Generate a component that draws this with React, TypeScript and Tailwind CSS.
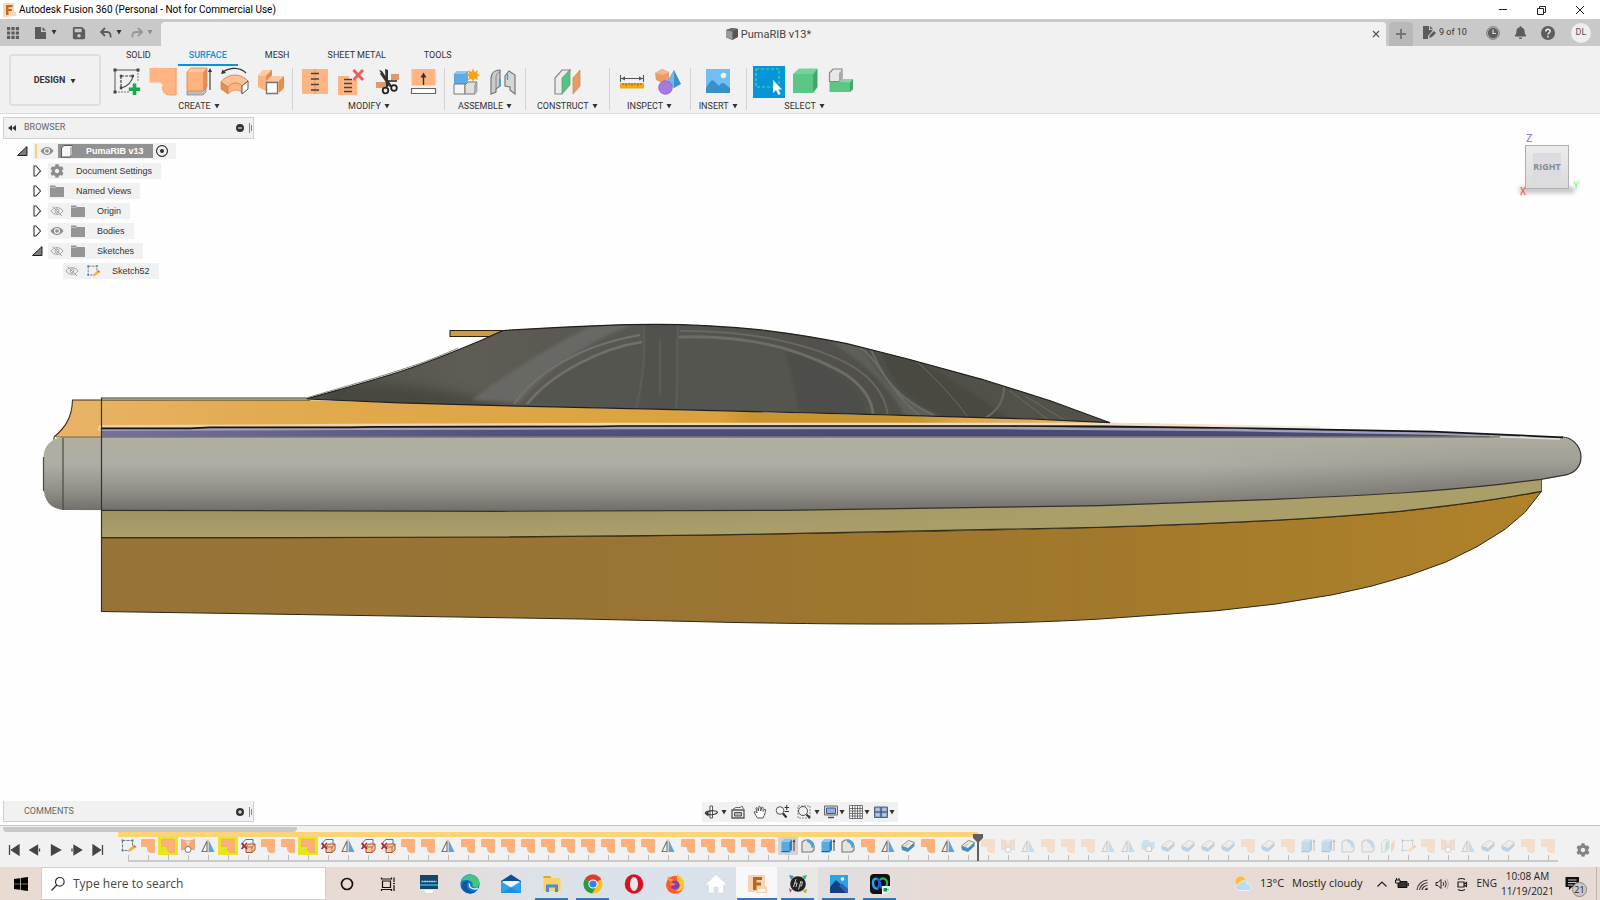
import React from "react";
import { FaCog, FaBell, FaSave } from "react-icons/fa";

type P = { children?: React.ReactNode };

const Ic = ({ children, box = 32, className = "size-8" }: P & { box?: number; className?: string }) => (
  <svg viewBox={`0 0 ${box} ${box}`} className={className + " shrink-0"} fill="none" aria-hidden="true">
    {children}
  </svg>
);

const Caret = ({ className = "text-[#333]" }: { className?: string }) => (
  <svg viewBox="0 0 6 5" className={"h-[5px] w-[6px] shrink-0 " + className} aria-hidden="true">
    <path d="M0.500 0H5.500L3 4.500Z" fill="currentColor" />
  </svg>
);

/* ---------- Ribbon icons, drawn on a 32px grid ---------- */

const PatchIcon = () => (
  <Ic>
    <path d="M2.500 2H29.500V29H24C18 29 15.500 26 15.500 21V19.500C15.500 17.500 14 16.500 12 16.500H2.500Z" fill="#ffb583" />
    <path d="M29 2V29H24C18 29 15.500 26 15.500 21" stroke="#f3a069" strokeWidth="1" />
  </Ic>
);

const SketchIcon = () => (
  <Ic>
    <path d="M4 4H27M4 4V26" stroke="#555" strokeWidth="1" />
    <path d="M27 4V16M4 26H18" stroke="#777" strokeWidth="1" strokeDasharray="2 1" />
    <path d="M10 10V22M10 10H22" stroke="#444" strokeWidth="1.200" strokeDasharray="3 1" />
    <path d="M22 10C21 16 16 21 10 22" stroke="#444" strokeWidth="1.200" />
    <path d="M2.500 2.500h3v3h-3zM25.500 2.500h3v3h-3zM2.500 24.500h3v3h-3zM8.800 8.800h2.500v2.500h-2.500zM8.800 20.800h2.500v2.500h-2.500zM20.500 8.800h2.500v2.500h-2.500z" fill="#444" />
    <path d="M23.500 17.500V29M17.800 23.200H29.200" stroke="#1fa64a" strokeWidth="3.600" />
  </Ic>
);

const ExtrudeIcon = () => (
  <Ic>
    <path d="M4 25L7 22H23V26L20 29H4Z" fill="#b9bcc0" stroke="#777" strokeWidth=".6" />
    <path d="M4 6L8 2H24L20 6Z" fill="#ffc79e" />
    <path d="M4 6H20V25H4Z" fill="#ffb27c" />
    <path d="M20 6L24 2V21L20 25Z" fill="#e88f57" />
    <path d="M4 6L8 2H24V21L20 25H4Z" stroke="#d98850" strokeWidth=".8" />
    <path d="M27 24V5" stroke="#444" strokeWidth="1.200" />
    <path d="M27 2L29 6H25Z" fill="#333" />
  </Ic>
);

const SweepIcon = () => (
  <Ic>
    <path d="M4 6C11 1 21 1 27 7" stroke="#333" strokeWidth="1.200" />
    <path d="M2 8L3.500 3.500L7 7Z" fill="#333" />
    <path d="M2 16C9 7 22 7 29 15L23 20C19 16 13 16 9 21Z" fill="#ffc093" stroke="#c97c48" strokeWidth=".8" />
    <path d="M2 16L9 21V28L2 23Z" fill="#e98c52" stroke="#c97c48" strokeWidth=".6" />
    <path d="M9 21C13 16 19 16 23 20V27C19 23 14 23 9 28Z" fill="#ffb583" stroke="#c97c48" strokeWidth=".6" />
    <path d="M23 20L29 15V23L23 28Z" fill="#fff" stroke="#555" strokeWidth="1" />
  </Ic>
);

const FlangeIcon = () => (
  <Ic>
    <path d="M3 10L8 4H17V10H27L29 13V21L24 26H13L3 21Z" fill="#ffb27c" />
    <path d="M3 10L8 4H17L12 10ZM12 15L17 10H29L24 15Z" fill="#ffc9a3" />
    <path d="M24 15L29 10V22L24 27Z" fill="#e98c52" />
    <path d="M11 10L17 3.500V9L11 15Z" fill="#e58a50" />
    <path d="M11.500 16.500H22.500V27.500H11.500Z" fill="#fff" stroke="#777" strokeWidth="1.400" />
  </Ic>
);

const StitchIcon = () => (
  <Ic>
    <path d="M3 3H29V28H3Z" fill="#ffb583" />
    <path d="M16 3V28" stroke="#ef965c" strokeWidth="1" />
    <path d="M12 7.500H20M12 13H20M12 18.500H20M12 24H20" stroke="#444" strokeWidth="1.300" />
  </Ic>
);

const UnstitchIcon = () => (
  <Ic>
    <path d="M3 10H14V29H3ZM16 14H22V29H14V14Z" fill="#ffb583" />
    <path d="M9 13.500H17M9 17.500H17M9 21.500H17M9 25.500H17" stroke="#444" strokeWidth="1.300" />
    <path d="M18.500 4L28 14M28 4L18.500 14" stroke="#f25b5b" strokeWidth="3" />
  </Ic>
);

const TrimIcon = () => (
  <Ic>
    <path d="M5 16H16V22H5ZM20 8H28V14H20Z" fill="#e2996a" />
    <path d="M8 4L11 5L21 20L19 21ZM14 3L17 4L17 21H15Z" fill="#333" />
    <path d="M10 7L19 20" stroke="#333" strokeWidth="2.400" />
    <circle cx="14.500" cy="24.500" r="2.800" stroke="#222" strokeWidth="1.800" />
    <circle cx="23" cy="22" r="2.800" stroke="#222" strokeWidth="1.800" />
    <path d="M17 15H26" stroke="#333" strokeWidth="1.600" />
  </Ic>
);

const ExtendIcon = () => (
  <Ic>
    <path d="M4.500 3H28.500V19.500H4.500Z" fill="#ffb583" />
    <path d="M4.500 22.500H28.500V27.500H4.500Z" fill="#fff" stroke="#666" strokeWidth="1.200" />
    <path d="M16.500 19V9" stroke="#333" strokeWidth="1.400" />
    <path d="M16.500 6.500L19.500 11.500H13.500Z" fill="#333" />
  </Ic>
);

const ComponentIcon = () => (
  <Ic>
    <path d="M3 8L6 5H17V15L15 18H3Z" fill="#5ea9e6" />
    <path d="M3 8L6 5H17L14 8Z" fill="#8cc6f2" />
    <path d="M3 18H14V28H3Z" fill="#f4f4f4" stroke="#777" />
    <path d="M14 19L17 16H26L24 19V28H14Z" fill="#e0e0e0" stroke="#777" />
    <path d="M24 19L26.500 16.500V25.500L24 28Z" fill="#aaa" />
    <path d="M22 2.500L23.500 6L27 4.300L26 7.800L29 9L26 10.500L27 14L23.500 12.500L22 16L20.500 12.500L17 14L18 10.500L15 9L18 7.800L17 4.300L20.500 6Z" fill="#f6a21b" />
  </Ic>
);

const JointIcon = () => (
  <Ic>
    <path d="M4 28V13C4 7 8 4 13 4V20L9 23V26Z" fill="#c9ccce" stroke="#777" strokeWidth="1.200" />
    <path d="M9 24V12C9 8 11 6 13.500 6" stroke="#888" strokeWidth="1" />
    <path d="M18 20V10L22 5L28 9V28L23 24V21Z" fill="#d4d6d8" stroke="#777" strokeWidth="1.200" />
    <path d="M13 13V20M20.500 8V14" stroke="#2f9be0" strokeWidth="1.300" />
  </Ic>
);

const PlaneIcon = () => (
  <Ic>
    <path d="M4 28V12L11 4H19L11 28Z" fill="#ececec" stroke="#888" strokeWidth="1.200" />
    <path d="M11 12L19 3.500V19L11 28Z" fill="#52c582" stroke="#6d8f7a" strokeWidth=".7" />
    <path d="M22 12L29 4V20L22 28Z" fill="#e99a67" stroke="#c98559" strokeWidth=".7" />
  </Ic>
);

const MeasureIcon = () => (
  <Ic>
    <path d="M4.500 9V16M27.500 9V16M5 12.500H27" stroke="#555" strokeWidth="1.100" />
    <path d="M5 12.500L9 10.500V14.500ZM27 12.500L23 10.500V14.500Z" fill="#555" />
    <path d="M4 17H28V22.500H4Z" fill="#f6a80e" />
    <path d="M7 17v2M10 17v3M13 17v2M16 17v3M19 17v2M22 17v3M25 17v2" stroke="#7b5200" strokeWidth=".8" />
  </Ic>
);

const InterferenceIcon = () => (
  <Ic>
    <path d="M3 7L10 3L17 6V13L10 17L4 14Z" fill="#ec9a68" />
    <path d="M3 7L10 3L17 6L11 9Z" fill="#f6b58b" />
    <path d="M22 4L29 18L22 22L15 16Z" fill="#3f8fcd" />
    <path d="M22 4V22L15 16Z" fill="#74b8ea" />
    <circle cx="13.500" cy="21.500" r="6.800" fill="#a67bdf" stroke="#8a5cc9" strokeWidth=".8" />
  </Ic>
);

const PictureIcon = () => (
  <Ic>
    <path d="M4 3H28V27H4Z" fill="#72bff5" />
    <path d="M4 22C8 15 10 13 12 15L17 20C19 17 21 16 23 18L28 22V27H4Z" fill="#3c8fc9" />
    <circle cx="21.500" cy="9.500" r="2.700" fill="#fdf7bd" />
  </Ic>
);

const SelectIcon = () => (
  <Ic>
    <path d="M0 0H32V32H0Z" fill="#0696d7" />
    <path d="M3 3H26V21H3Z" stroke="#59d68f" strokeWidth="1.200" strokeDasharray="3 2" />
    <path d="M20 14V27L23 24L25.500 29L27.500 28L25.300 23.500H29Z" fill="#fff" />
  </Ic>
);

const GreenBox = () => (
  <Ic>
    <path d="M4 8L10 2.500H28.500L24 8Z" fill="#74d39a" />
    <path d="M4 8H24V27H4Z" fill="#5bc686" />
    <path d="M24 8L28.500 2.500V21L24 27Z" fill="#41a76a" />
  </Ic>
);

const BodySelectIcon = () => (
  <Ic>
    <path d="M4.500 7L8 3H17V12L14 15.500H4.500Z" fill="#e8e8e8" stroke="#888" strokeWidth="1.200" />
    <path d="M14 15L17 12V4L14 7Z" fill="#aaa" />
    <path d="M4.500 16H15L17 13H28V23L25 26H4.500Z" fill="#5bc686" />
    <path d="M15 16L17.500 13H28L25 16.500Z" fill="#83d9a6" />
    <path d="M25 16.500L28 13V23L25 26Z" fill="#41a76a" />
  </Ic>
);

/* ---------- Timeline icons, drawn on a 16px grid ---------- */

type Kind = "sketch" | "patch" | "loft" | "mirror" | "remove" | "box" | "fillet" | "thicken" | "combine" | "plane";

const glyphs: Record<Kind, React.ReactNode> = {
  sketch: (
    <>
      <path d="M2.500 2.500H12.500V9M2.500 2.500V12.500H9" stroke="#777" strokeWidth="1" strokeDasharray="3 1" />
      <path d="M1.500 1.500h2v2h-2zM11.500 1.500h2v2h-2zM1.500 11.500h2v2h-2z" fill="#2f8fd6" />
      <path d="M8 14L9 11L13 8L15 10L11 13Z" fill="#f7b23c" />
      <path d="M13 8L14.500 7L16 9L15 10Z" fill="#e8483c" />
    </>
  ),
  patch: <path d="M1.500 1.500H14.500V14.500H11C8.500 14.500 7.500 13 7.500 11V10.500C7.500 9 7 8.500 5.500 8.500H1.500Z" fill="#ffb07a" stroke="#f2a36c" strokeWidth=".6" />,
  loft: (
    <>
      <path d="M1.500 1.500L5 2.500H11L14.500 1.500V12L11 11H5L1.500 12Z" fill="#f6a878" stroke="#c58860" strokeWidth=".5" />
      <path d="M5 2.500L8 8L11 2.500Z" fill="#ffd0b0" />
      <circle cx="8" cy="11.500" r="3" fill="#fff" stroke="#777" />
    </>
  ),
  mirror: (
    <>
      <path d="M7 3V13.500H2Z" fill="#f2f2f2" stroke="#777" strokeWidth="1.100" />
      <path d="M9 2.500L14.500 14H9Z" fill="#5ba7dd" />
      <path d="M8 1.500V14.500" stroke="#999" strokeWidth=".8" />
    </>
  ),
  remove: (
    <>
      <path d="M3 4L6 1.500H13V6L10 9H3Z" fill="#eef4fa" stroke="#2f7fc0" />
      <path d="M6 9L8.500 6H15V12L12 14.500H6Z" fill="#ffc79e" stroke="#9a5c33" />
      <path d="M6 9H12V14.500M12 9L15 6" stroke="#9a5c33" strokeWidth=".8" />
      <path d="M1.500 5L7 11M7 5L1.500 11" stroke="#c8202a" strokeWidth="1.800" />
    </>
  ),
  box: (
    <>
      <path d="M1.500 4L4 1.500H12V11.500L9.500 14.500H1.500Z" fill="#59a9e2" />
      <path d="M1.500 4L4 1.500H12L9.500 4Z" fill="#8cc8f0" />
      <path d="M9.500 4L12 1.500V11.500L9.500 14.500Z" fill="#2f7fb8" />
      <path d="M1.500 13.500H9" stroke="#555" />
      <path d="M14 13V3" stroke="#444" />
      <path d="M14 1L15.300 4H12.700Z" fill="#333" />
    </>
  ),
  fillet: (
    <>
      <path d="M2 13.500V4L5 2H9C12 3 14 6 14 9V12L12 14H2Z" fill="#e4e4e4" stroke="#777" strokeWidth="1.100" />
      <path d="M7 1.500C11.500 1.500 14.500 5 14.500 9L11.500 10C11.500 7 9.500 4.500 7 4Z" fill="#4fa3de" />
    </>
  ),
  thicken: (
    <>
      <path d="M1.500 9.500L2 8L14.500 5V8L8 14L2 12Z" fill="#3f8dc9" />
      <path d="M1.500 8L8.500 2.500L14.500 4.500L8 10.500Z" fill="#f1f1f1" stroke="#777" strokeWidth=".9" />
      <path d="M3.500 8.200L8.500 4.200L10.500 5L6 9Z" fill="#d2d2d2" />
    </>
  ),
  combine: (
    <>
      <path d="M1.500 5L4 2H9V4H14.500V10L12 12.500H5L1.500 11Z" fill="#79b9e6" />
      <path d="M6 8H11.500V13.500H6Z" fill="#fff" stroke="#777" />
    </>
  ),
  plane: (
    <>
      <path d="M1.500 14V5L5 1.500H7L5 14Z" fill="#e8e8e8" stroke="#888" strokeWidth=".8" />
      <path d="M5.500 6L9.500 1.500V10L5.500 14.500Z" fill="#52c582" />
      <path d="M11 6L14.500 1.500V10L11 14.500Z" fill="#e99a67" />
    </>
  ),
};

const rep = (k: Kind, n: number): Kind[] => Array.from({ length: n }, () => k);

const timeline: Kind[] = [
  "sketch", "patch", "patch", "loft", "mirror", "patch", "remove", "patch", "patch", "patch", "remove", "mirror", "remove", "remove",
  "patch", "patch", "mirror", ...rep("patch", 10), "mirror", ...rep("patch", 5),
  "box", "fillet", "box", "fillet", "patch", "mirror", "thicken", "patch", "mirror", "thicken",
  "patch", "loft", "mirror", ...rep("patch", 3), "mirror", "mirror", "combine", ...rep("thicken", 4),
  "patch", "thicken", "patch", "box", "box", "fillet", "fillet", "plane", "sketch", "patch", "loft", "mirror",
  "thicken", "thicken", "patch", "patch",
];

const MARKER = 42;
const errors = [2, 5, 9];

/* ---------- Title and document tabs ---------- */

const TitleBar = () => (
  <header className="flex h-[19px] items-center bg-white pl-[2px]">
    <Ic box={14} className="size-[14px]">
      <path d="M1 0H12V9H14V13H8V14H1Z" fill="#f9d8ba" />
      <path d="M4 2H10.500V4.200H6.500V6H10V8H6.500V12H4Z" fill="#c5691c" />
    </Ic>
    <h1 className="ml-[3px] text-[10px] leading-4 text-black">Autodesk Fusion 360 (Personal - Not for Commercial Use)</h1>
    <div className="ml-auto flex h-full items-center">
      <button aria-label="Minimize" className="flex w-[38px] justify-center">
        <Ic box={10} className="size-[10px]"><path d="M1 4.500H9" stroke="#222" /></Ic>
      </button>
      <button aria-label="Restore" className="flex w-[38px] justify-center">
        <Ic box={10} className="size-[10px]"><path d="M1.500 3.500H7.500V9.500H1.500ZM3.500 3V1.500H9.500V7.500H8" stroke="#222" /></Ic>
      </button>
      <button aria-label="Close" className="flex w-10 justify-center">
        <Ic box={10} className="size-[10px]"><path d="M1 1L9 9M9 1L1 9" stroke="#222" /></Ic>
      </button>
    </div>
  </header>
);

const DocBar = () => (
  <div className="flex h-[27px] bg-[#c9c9c9] text-[#5c5c5c]">
    <div className="flex w-[161px] shrink-0 items-center pl-[7px]">
      <button aria-label="Data panel">
        <Ic box={12} className="size-3">
          <path d="M0 0h3.200v3.200H0zM4.400 0h3.200v3.200H4.400zM8.800 0H12v3.200H8.800zM0 4.400h3.200v3.200H0zM4.400 4.400h3.200v3.200H4.400zM8.800 4.400H12v3.200H8.800zM0 8.800h3.200V12H0zM4.400 8.800h3.200V12H4.400zM8.800 8.800H12V12H8.800z" fill="#5c5c5c" />
        </Ic>
      </button>
      <button aria-label="File" className="ml-4 flex items-center gap-1">
        <Ic box={12} className="size-3"><path d="M0 0H6V5H11V12H0ZM7.500 0L11 3.500H7.500Z" fill="#5c5c5c" /></Ic>
        <Caret />
      </button>
      <button aria-label="Save" className="ml-[15px]"><FaSave className="size-[14px]" /></button>
      <button aria-label="Undo" className="ml-[13px] flex items-center gap-[3px]">
        <Ic box={14} className="size-[14px]"><path d="M2 6H8C11 6 12 8 11.500 11.500M6 2L2 6L6 10" stroke="#5c5c5c" strokeWidth="1.800" /></Ic>
        <Caret />
      </button>
      <button aria-label="Redo" className="ml-2 flex items-center gap-[3px]">
        <Ic box={14} className="size-[14px]"><path d="M12 6H6C3 6 2 8 2.500 11.500M8 2L12 6L8 10" stroke="#969696" strokeWidth="1.800" /></Ic>
        <Caret className="text-[#8a8a8a]" />
      </button>
    </div>
    <div className="mt-[3px] flex flex-1 items-center rounded-t bg-[#f1f1f1] pr-[3px]">
      <div className="flex flex-1 items-center justify-center gap-[2px] pl-[6px]">
        <Ic box={14} className="size-[14px]">
          <path d="M1 3L7 1L13 2V10L7.500 13L1 10.500Z" fill="#555" />
          <path d="M1 3L7.500 4.500V13L1 10.500Z" fill="#9a9a9a" />
          <path d="M1 3L7 1L13 2L7.500 4.500Z" fill="#6b6b6b" />
        </Ic>
        <span className="pt-px text-[11px] leading-4 text-[#444]">PumaRIB v13*</span>
      </div>
      <button aria-label="Close document" className="p-[3px]">
        <Ic box={8} className="size-2"><path d="M1 1L7 7M7 1L1 7" stroke="#555" strokeWidth="1.200" /></Ic>
      </button>
    </div>
    <button aria-label="New design" className="ml-[3px] mt-[3px] flex w-6 items-center justify-center rounded-t bg-[#b9b9b9]">
      <Ic box={12} className="size-3"><path d="M6 1V11M1 6H11" stroke="#777" strokeWidth="2" /></Ic>
    </button>
    <div className="flex w-[187px] items-center pl-[9px]">
      <button className="flex items-center gap-[3px] text-[9px] text-[#333]">
        <Ic box={14} className="size-[14px]">
          <path d="M1 0H7V4H11L6 10V13H1Z" fill="#5c5c5c" />
          <path d="M8 0L11 3H8ZM7 12L8 9L12 5L14 7L10 11Z" fill="#5c5c5c" />
        </Ic>
        9 of 10
      </button>
      <button aria-label="Job status" className="ml-[19px]">
        <Ic box={14} className="size-[14px]">
          <circle cx="7" cy="7" r="6.300" stroke="#5c5c5c" strokeWidth=".8" />
          <circle cx="7" cy="7" r="5.200" fill="#5c5c5c" />
          <path d="M7 3.500V7.500H10" stroke="#ddd" strokeWidth="1.200" />
        </Ic>
      </button>
      <button aria-label="Notifications" className="ml-[14px]"><FaBell className="size-[13px]" /></button>
      <button aria-label="Help" className="ml-[14px]">
        <Ic box={14} className="size-[14px]">
          <circle cx="7" cy="7" r="7" fill="#5c5c5c" />
          <path d="M4.800 5.500C4.800 2.500 9.300 2.600 9.200 5.300C9.100 6.800 7 6.800 7 8.600M7 9.800V11.500" stroke="#eee" strokeWidth="1.500" />
        </Ic>
      </button>
      <button aria-label="Account DL" className="ml-4 flex size-5 items-center justify-center rounded-full bg-[#efefef] text-[9px] text-[#555]">DL</button>
    </div>
  </div>
);

/* ---------- Ribbon ---------- */

const tabs = ["SOLID", "SURFACE", "MESH", "SHEET METAL", "TOOLS"];

const groups: { name: string; pad: string; icons: [string, React.ReactNode][] }[] = [
  { name: "CREATE", pad: "pl-1 pr-[3px]", icons: [["Create sketch", <SketchIcon />], ["Patch", <PatchIcon />], ["Extrude", <ExtrudeIcon />], ["Sweep", <SweepIcon />], ["Thicken", <FlangeIcon />]] },
  { name: "MODIFY", pad: "pl-1 pr-[3px]", icons: [["Stitch", <StitchIcon />], ["Unstitch", <UnstitchIcon />], ["Trim", <TrimIcon />], ["Extend", <ExtendIcon />]] },
  { name: "ASSEMBLE", pad: "px-1", icons: [["New component", <ComponentIcon />], ["Joint", <JointIcon />]] },
  { name: "CONSTRUCT", pad: "px-[11px]", icons: [["Offset plane", <PlaneIcon />]] },
  { name: "INSPECT", pad: "px-1", icons: [["Measure", <MeasureIcon />], ["Interference", <InterferenceIcon />]] },
  { name: "INSERT", pad: "px-2", icons: [["Canvas", <PictureIcon />]] },
  { name: "SELECT", pad: "px-1", icons: [["Window selection", <SelectIcon />], ["Select body", <GreenBox />], ["Select component", <BodySelectIcon />]] },
];

const Ribbon = () => (
  <div className="flex h-[68px] border-b border-[#dcdcdc] bg-[#f1f1f1]">
    <button className="ml-[9px] mr-1 mt-2 flex h-[52px] w-[92px] shrink-0 items-center justify-center gap-[5px] rounded border-2 border-[#dedede] pt-[2px] text-[9px] font-bold text-[#333]">
      DESIGN <Caret />
    </button>
    <div className="flex min-w-0 flex-col">
      <div role="tablist" className="flex h-5 gap-4 pl-[10px]" aria-label="Workspace tabs">
        {tabs.map((t) => (
          <button
            key={t}
            role="tab"
            aria-selected={t === "SURFACE"}
            className={
              "border-b-2 px-[11px] text-[9px] leading-4 " +
              (t === "SURFACE" ? "border-[#0696d7] font-medium text-[#0696d7]" : "border-transparent text-[#333]")
            }
          >
            {t}
          </button>
        ))}
      </div>
      <div className="flex">
        {groups.map((g, i) => (
          <React.Fragment key={g.name}>
            {i > 0 && <div className="mt-[2px] h-[42px] w-px bg-[#d2d2d2]" />}
            <div className={"flex flex-col items-center " + g.pad}>
              <div className="flex">
                {g.icons.map(([label, icon]) => (
                  <button key={label} aria-label={label} className="flex w-9 justify-center">{icon}</button>
                ))}
              </div>
              <button className="flex h-[15px] items-center gap-[3px] pt-px text-[9px] leading-[14px] text-[#333]">
                {g.name} <Caret />
              </button>
            </div>
          </React.Fragment>
        ))}
      </div>
    </div>
  </div>
);

/* ---------- Browser tree ---------- */

const Eye = ({ off = false }: { off?: boolean }) => (
  <Ic box={14} className="size-[14px]">
    {off ? (
      <>
        <path d="M1 7C4 2.500 10 2.500 13 7C10 11.500 4 11.500 1 7Z" stroke="#a3a3a3" />
        <circle cx="7" cy="7" r="2" stroke="#a3a3a3" />
        <path d="M2.500 2.500L12 12" stroke="#a3a3a3" />
      </>
    ) : (
      <>
        <path d="M0.500 7C4 1.500 10 1.500 13.500 7C10 12.500 4 12.500 0.500 7Z" fill="#8f8f8f" />
        <circle cx="7" cy="7" r="3" fill="#f1f1f1" />
        <circle cx="7" cy="7" r="1.800" fill="#8f8f8f" />
      </>
    )}
  </Ic>
);

const Arrow = ({ open = false }: { open?: boolean }) => (
  <Ic box={12} className="size-3">
    {open ? (
      <path d="M11 1.500V10.500H1.500Z" fill="#7c7c7c" stroke="#222" />
    ) : (
      <path d="M3 1H5L9.500 6L5 11H3Z" fill="#fff" stroke="#333" strokeWidth="1.100" />
    )}
  </Ic>
);

const SmallSketch = () => <Ic box={16} className="size-[14px]">{glyphs.sketch}</Ic>;
const Folder = () => (
  <Ic box={14} className="size-[14px]"><path d="M0 1.500H5L6 3H14V13H0Z" fill="#959595" /><path d="M0 3.500H5.500" stroke="#c9c9c9" strokeWidth=".8" /></Ic>
);

const TreeRow = ({ open, eye, icon, label, indent }: { open?: boolean; eye?: "on" | "off"; icon: React.ReactNode; label: string; indent: string }) => (
  <li className={"flex h-5 items-center " + indent}>
    {open === undefined ? <span className="w-3" /> : <button aria-label={"Toggle " + label}><Arrow open={open} /></button>}
    <div className="ml-[5px] flex h-4 items-center bg-[#f1f1f1] pl-[2px] pr-[9px]">
      {eye && <button aria-label={"Show or hide " + label} className="mr-[7px]"><Eye off={eye === "off"} /></button>}
      {icon}
      <span className="ml-3 text-[9px] leading-4 text-[#333]">{label}</span>
    </div>
  </li>
);

const PanelEnd = ({ plus = false }: { plus?: boolean }) => (
  <>
    <button aria-label={plus ? "Add comment" : "Collapse"} className="ml-auto">
      <Ic box={8} className="size-2">
        <circle cx="4" cy="4" r="4" fill="#333" />
        <path d={plus ? "M2 4H6M4 2V6" : "M2 4H6"} stroke="#fff" />
      </Ic>
    </button>
    <svg viewBox="0 0 4 10" className="ml-[5px] h-[10px] w-1" fill="none" aria-hidden="true"><path d="M0.500 0V10M2.500 2V8" stroke="#888" /></svg>
  </>
);

const BrowserPanel = () => (
  <section className="w-[251px]">
    <div className="flex h-[22px] items-center border border-[#cfcfcf] bg-[#f1f1f1] pl-1">
      <button aria-label="Collapse browser">
        <Ic box={8} className="size-2"><path d="M4 1V7L0 4ZM8 1V7L4 4Z" fill="#333" /></Ic>
      </button>
      <h2 className="ml-2 text-[9px] text-[#666]">BROWSER</h2>
      <PanelEnd />
    </div>
    <ul className="pt-[2px] font-['Liberation_Sans',sans-serif]">
      <li className="flex h-5 items-center pl-[13px]">
        <button aria-label="Toggle PumaRIB v13"><Arrow open /></button>
        <div className="ml-[5px] flex h-4 items-center bg-[#f1f1f1] pl-[2px] pr-1">
          <span className="h-[14px] w-[2px] bg-[#fbd070]" />
          <button aria-label="Show or hide PumaRIB v13" className="ml-[3px]"><Eye /></button>
          <div className="ml-1 flex h-[14px] items-center bg-[#929292] pl-[2px] pr-[9px]">
            <Ic box={14} className="size-[14px]">
              <path d="M1.500 4L4 1.500H12.500V10.500L10 13H1.500Z" fill="#f6f6f6" stroke="#555" />
              <path d="M10 4L12.500 1.500V10.500L10 13Z" fill="#bbb" />
            </Ic>
            <span className="ml-3 text-[9px] font-bold leading-4 text-white">PumaRIB v13</span>
          </div>
          <label className="ml-[3px] mr-1 flex">
            <input type="radio" defaultChecked aria-label="Activate PumaRIB v13" className="size-3 appearance-none rounded-full border border-[#333] bg-[#333] shadow-[inset_0_0_0_3px_#f1f1f1]" />
          </label>
        </div>
      </li>
      <TreeRow indent="pl-7" open={false} icon={<FaCog className="size-[14px] text-[#8c8c8c]" />} label="Document Settings" />
      <TreeRow indent="pl-7" open={false} icon={<Folder />} label="Named Views" />
      <TreeRow indent="pl-7" open={false} eye="off" icon={<Folder />} label="Origin" />
      <TreeRow indent="pl-7" open={false} eye="on" icon={<Folder />} label="Bodies" />
      <TreeRow indent="pl-7" open eye="off" icon={<Folder />} label="Sketches" />
      <TreeRow indent="pl-[43px]" eye="off" icon={<SmallSketch />} label="Sketch52" />
    </ul>
  </section>
);

/* ---------- Model ---------- */

const cabin =
  "M306 399C345 388 380 379 413 367.300C440 357.500 463 348 482 340L503 330.500C553 327.500 610 324.300 655 324.300C695 324.300 730 326.500 765 330.300C795 334 820 338 847 343.700L908 359L982 379.300L1051 401L1110 422.700L1031 419L867 414.300L663 409.300L500 405.700L400 402.800Z";
const tubeBottom = "C600 511.500 700 511.500 786 510.300C900 508.500 1020 507.500 1100 505.700C1160 504 1215 502 1267 499.700C1315 497.500 1360 495.500 1400 493C1435 490.500 1470 487.500 1500 484.300L1541 479.300";
const chineCurve = "C1500 499.300 1450 506 1400 511.300C1360 515 1310 518.500 1267 520.700C1210 523.500 1160 525.700 1100 527.300C1000 530 900 532 786 533.700C690 535.500 590 536.500 500 537C360 537.700 240 537.700 101.500 537.700";

const Boat = () => (
  <svg viewBox="0 114 1600 711" className="absolute inset-0 h-full w-full" fill="none" role="img" aria-label="Side view of boat model">
    <defs>
      <linearGradient id="tube" x1="0" y1="437" x2="0" y2="511" gradientUnits="userSpaceOnUse">
        <stop offset="0" stopColor="#b1afa0" />
        <stop offset=".38" stopColor="#aeaca5" />
        <stop offset=".75" stopColor="#8f8c86" />
        <stop offset="1" stopColor="#706e68" />
      </linearGradient>
      <linearGradient id="bowTube" x1="0" y1="437" x2="0" y2="495" gradientUnits="userSpaceOnUse">
        <stop offset="0" stopColor="#aeac9f" />
        <stop offset=".4" stopColor="#a2a097" />
        <stop offset=".8" stopColor="#84827b" />
        <stop offset="1" stopColor="#77756e" />
      </linearGradient>
      <linearGradient id="bowFade" x1="1200" y1="0" x2="1480" y2="0" gradientUnits="userSpaceOnUse">
        <stop offset="0" stopColor="#fff" stopOpacity="0" />
        <stop offset="1" stopColor="#fff" />
      </linearGradient>
      <mask id="bowMask" maskUnits="userSpaceOnUse" x="1200" y="420" width="400" height="100">
        <path d="M1200 420H1600V520H1200Z" fill="url(#bowFade)" />
      </mask>
      <linearGradient id="hull" x1="101" y1="0" x2="1541" y2="0" gradientUnits="userSpaceOnUse">
        <stop offset="0" stopColor="#977339" />
        <stop offset=".4" stopColor="#9a7432" />
        <stop offset=".7" stopColor="#a2792b" />
        <stop offset="1" stopColor="#b0832a" />
      </linearGradient>
      <linearGradient id="olive" x1="0" y1="508" x2="0" y2="540" gradientUnits="userSpaceOnUse">
        <stop offset="0" stopColor="#9b9160" />
        <stop offset="1" stopColor="#b0a26d" />
      </linearGradient>
      <linearGradient id="oliveBow" x1="400" y1="0" x2="1100" y2="0" gradientUnits="userSpaceOnUse">
        <stop offset="0" stopColor="#aa9e69" stopOpacity="0" />
        <stop offset="1" stopColor="#aa9e69" />
      </linearGradient>
      <linearGradient id="deck" x1="53" y1="0" x2="1110" y2="0" gradientUnits="userSpaceOnUse">
        <stop offset="0" stopColor="#e9b468" />
        <stop offset=".2" stopColor="#e2ab50" />
        <stop offset=".63" stopColor="#dba13c" />
        <stop offset=".66" stopColor="#c9952f" />
        <stop offset=".82" stopColor="#c9952f" />
        <stop offset=".86" stopColor="#e0a74e" />
        <stop offset="1" stopColor="#e9b468" />
      </linearGradient>
      <linearGradient id="stripe" x1="101" y1="0" x2="900" y2="0" gradientUnits="userSpaceOnUse">
        <stop offset="0" stopColor="#74729a" />
        <stop offset=".5" stopColor="#53527f" />
        <stop offset="1" stopColor="#494975" />
      </linearGradient>
      <linearGradient id="rim" x1="99" y1="0" x2="1320" y2="0" gradientUnits="userSpaceOnUse">
        <stop offset="0" stopColor="#eed3a9" />
        <stop offset=".8" stopColor="#f0dabb" />
        <stop offset="1" stopColor="#f4ece2" />
      </linearGradient>
      <linearGradient id="glass" x1="306" y1="0" x2="1110" y2="0" gradientUnits="userSpaceOnUse">
        <stop offset="0" stopColor="#50504b" />
        <stop offset=".2" stopColor="#5f5c54" />
        <stop offset=".45" stopColor="#565551" />
        <stop offset=".75" stopColor="#4f4e49" />
        <stop offset="1" stopColor="#54534a" />
      </linearGradient>
      <filter id="soft" x="-5%" y="-20%" width="110%" height="140%"><feGaussianBlur stdDeviation="1.500" /></filter>
      <filter id="wide" x="-20%" y="-60%" width="140%" height="220%"><feGaussianBlur stdDeviation="6" /></filter>
      <filter id="fine" x="-5%" y="-20%" width="110%" height="140%"><feGaussianBlur stdDeviation=".7" /></filter>
      <clipPath id="cabinClip"><path d={cabin} /></clipPath>
    </defs>

    <path d="M101.500 537.700C240 537.700 360 537.700 500 537C590 536.500 690 535.500 786 533.700C900 532 1000 530 1100 527.300C1160 525.700 1210 523.500 1267 520.700C1310 518.500 1360 515 1400 511.300C1450 506 1500 499.300 1541.500 491.300L1525 512.300L1505 529.300L1477 546.700L1446 562L1410 575L1372 586L1333 594.700L1276 604L1217 610.700L1100 619C1050 622 980 624 929 624C850 624.300 800 623.500 745 622.700L582 619L330 615L101.500 611.500Z" fill="url(#hull)" stroke="#2e2513" strokeWidth="1" />
    <path d={`M101.500 510.300L500 511.300${tubeBottom}L1541.500 491.300${chineCurve}Z`} fill="url(#olive)" />
    <path d={`M101.500 510.300L500 511.300${tubeBottom}L1541.500 491.300${chineCurve}Z`} fill="url(#oliveBow)" />
    <path d="M1541.500 479V491.300" stroke="#5d5a3a" strokeWidth="1" />
    <path d={"M1541.500 491.300" + chineCurve} stroke="#33301c" strokeWidth="1.200" />

    <path d="M72.500 400H306L500 405.700L1031 419L1110 422.700L1210 425V430H101V437H54C66 427 72 417 72.500 400Z" fill="url(#deck)" />
    <path d="M54 440V437C66 427 72 417 72.500 400H101.500" stroke="#3c3320" strokeWidth="1.100" />
    <path d="M101.500 397.500H306V400.500H101.500Z" fill="#a29c8c" />
    <path d="M101.500 398H306" stroke="#6f6a5e" strokeWidth="1" />
    <path d="M101.500 400.500H310" stroke="#8a7247" strokeWidth="1" />

    <path d="M64 437H1500L1562 437C1572 437 1581 446 1581 457C1581 467 1574 473.500 1566 474.800L1541 479.300C1500 485 1450 490 1400 493C1360 495.500 1315 497.500 1267 499.700C1215 502 1160 504 1100 505.700C1020 507.500 900 508.500 786 510.300C700 511.500 600 511.500 500 511.300L64 510C50 509 43.500 500 43.500 486V458C43.500 446 51 438 64 437Z" fill="url(#tube)" />
    <path d="M1200 437H1562C1572 437 1581 446 1581 457C1581 467 1574 473.500 1566 474.800L1541 479.300C1480 488 1380 494.500 1267 499.700L1200 502.500Z" fill="url(#bowTube)" mask="url(#bowMask)" />
    <path d={`M101.500 510.300L500 511.300${tubeBottom}L1566 474.800C1574 473.500 1581 467 1581 457C1581 446 1572 437 1562 437`} stroke="#33322c" strokeWidth="1.200" />
    <path d="M63 437.500V510M43.500 457V491" stroke="#4b4a45" strokeWidth="1.200" />
    <path d="M56 437H101" stroke="#76684a" strokeWidth="1" />

    <path d="M101.500 429L190 428.500L350 427.500L620 426.500H1100L1233 428.500L1433 432.200L1505 436.500H101.500Z" fill="url(#stripe)" />
    <path d="M101.500 429.700L350 428.800L620 428H1000L1100 429L1233 430L1433 433.500L1520 436.500" stroke="#a09fb8" strokeWidth="2.600" />
    <path d="M1490 436.500L1560 439" stroke="#e2e2de" strokeWidth="1.600" />
    <path d="M99 426.800C97 430 100 431 102 430" stroke="#e6d2b0" strokeWidth="1.500" />
    <path d="M99 426.500L190 426L350 425L620 424H1110L1233 426L1320 427.500" stroke="url(#rim)" strokeWidth="2.400" />
    <path d="M101.500 428.300L190 428.300L210 427.300H350L375 426.800L600 426.500L620 426H1010L1100 426.300L1233 428L1433 431.700L1563 437.300" stroke="#141414" strokeWidth="1.700" />
    <path d="M101.500 436.900H1500" stroke="#4d474f" strokeWidth="1" />
    <path d="M101.500 397.500V611.500" stroke="#38331f" strokeWidth="1.200" />

    <path d="M450 330.500H503L490 336.500H450Z" fill="#d09a3e" stroke="#2b220f" strokeWidth="1.100" />
    <path d={cabin} fill="url(#glass)" />
    <g clipPath="url(#cabinClip)">
      <path d="M330 385C400 380 450 390 520 408H320Z" fill="#464641" filter="url(#wide)" />
      <g filter="url(#soft)">
        <path d="M472 400C500 378 550 345 600 322L640 322C590 340 545 370 520 402Z" fill="#686865" />
        <path d="M530 404C555 370 600 345 680 338C770 332 850 370 872 414L700 412Z" fill="#545450" />
        <path d="M785 352C790 370 795 390 800 416H868C866 392 830 362 785 350Z" fill="#4e4e4a" />
        <path d="M645 322H678L680 410H640Z" fill="#51514d" />
        <path d="M825 336L860 345C880 375 900 405 945 418L905 417C890 385 860 360 845 352Z" fill="#5e5e5a" />
        <path d="M880 350L915 358C960 385 985 400 1010 420H950C915 405 890 385 880 350Z" fill="#494843" />
      </g>
      <g filter="url(#fine)">
        <path d="M514 404C535 374 580 345 640 335" stroke="#72726e" strokeWidth="2" />
        <path d="M527 404C550 375 600 348 642 342" stroke="#70706c" strokeWidth="2.500" />
        <path d="M678 337C750 334 800 350 838 370C862 383 873 400 873 416" stroke="#6c6c68" strokeWidth="3" />
        <path d="M680 331C760 330 820 348 852 366C878 382 886 400 888 416" stroke="#686864" strokeWidth="2" />
        <path d="M858 346C880 360 886 388 920 416M871 350C882 372 890 395 935 416" stroke="#6a6a66" strokeWidth="2" />
        <path d="M643 322C646 350 643 380 636 408M660 340V395M678 322C676 350 679 380 676 408" stroke="#5b5b57" strokeWidth="2.500" />
        <path d="M1004 387C1004 402 996 412 985 418" stroke="#696863" strokeWidth="2" />
      </g>
      <path d="M917 362C938 380 955 400 968 417M1010 391L1050 421M1025 396L1066 421" stroke="#6f6e69" strokeWidth=".9" />
    </g>
    <path d={cabin} stroke="#20201c" strokeWidth="1.200" />
    <path d="M306 398C345 386.500 380 377 413 365.800C430 360 445 354 458 348" stroke="#8b8a82" strokeWidth="1" />
  </svg>
);

const ViewCube = () => (
  <div className="absolute right-[31px] top-[31px]">
    <div className="relative size-11">
      <div className="absolute -left-[6px] -right-[6px] bottom-[-4px] h-[6px] rounded-full bg-[#888]/50 blur-[2px]" />
      <button className="relative flex size-11 items-center justify-center border border-[#aeb0b2] bg-gradient-to-b from-[#ececec] to-[#dadada]">
        <span className="flex h-7 w-7 items-center justify-center bg-[#dadcdf] font-['Open_Sans',sans-serif] text-[9px] font-bold text-[#858b93]">RIGHT</span>
      </button>
      <span className="absolute -top-[15px] left-px font-['Noto_Sans',sans-serif] text-[11px] font-medium leading-4 text-[#8080ff]">Z</span>
      <span className="absolute -left-[5px] top-[38px] font-['Noto_Sans',sans-serif] text-[10px] font-medium leading-4 text-[#f55]">X</span>
      <span className="absolute left-12 top-[32px] font-['Noto_Sans',sans-serif] text-[10px] font-medium leading-4 text-[#6dff6d]">Y</span>
    </div>
  </div>
);

const NavBar = () => (
  <div className="flex h-5 items-center gap-1 bg-[#f1f1f1] pl-[2px] pr-[3px]">
    <button aria-label="Orbit" className="flex items-center gap-[3px]">
      <Ic box={14} className="size-[14px]">
        <path d="M6 1H8.500V13H6Z" fill="#fff" stroke="#444" strokeWidth=".9" />
        <path d="M1.500 8C1 5.500 13 5 13.300 7.200C13.500 9.500 6 10.200 3 9.300" stroke="#333" strokeWidth="1.100" />
        <path d="M0.500 8.500L4.500 6.500V11.500Z" fill="#333" />
      </Ic>
      <Caret />
    </button>
    <button aria-label="Look at" className="mr-1">
      <Ic box={14} className="size-[14px]">
        <path d="M1 5H13V13H1Z" fill="#eee" stroke="#555" strokeWidth="1.300" />
        <path d="M3.500 7.500H10.500V11H3.500Z" fill="#aab6c8" stroke="#555" />
        <path d="M2 4L5 2.500H9L11 1L12.500 4" stroke="#666" />
      </Ic>
    </button>
    <button aria-label="Pan" className="mr-1">
      <Ic box={14} className="size-[14px]">
        <path d="M4.500 13C3 11 2 9 1 7C2 6 3 7 4 8L3 3C4 2 5 3 5.300 6L6 1.500C7 1 8 1.500 7.700 6L9 2C10 2 10.500 3 10 6.500L12 4C13 4.500 13 5 12 8C11.500 10 11 11 10 13Z" fill="#fff" stroke="#555" />
      </Ic>
    </button>
    <button aria-label="Zoom" className="mr-1">
      <Ic box={14} className="size-[14px]">
        <circle cx="5" cy="5.500" r="3.800" fill="#f4f8f8" stroke="#555" />
        <path d="M8 8.500L11.500 12.500" stroke="#333" strokeWidth="2.200" />
        <path d="M9.500 2.500H14M11.700 0V5M9.500 6.500H14" stroke="#333" />
      </Ic>
    </button>
    <button aria-label="Fit" className="flex items-center gap-[3px]">
      <Ic box={14} className="size-[14px]">
        <path d="M1 1H13V13H1Z" stroke="#888" strokeDasharray="2 1" />
        <circle cx="6" cy="6" r="4.500" fill="#eef4f4" stroke="#555" />
        <path d="M9.500 9.500L13 13" stroke="#333" strokeWidth="2" />
      </Ic>
      <Caret />
    </button>
    <button aria-label="Display settings" className="flex items-center gap-px">
      <Ic box={14} className="size-[14px]">
        <path d="M0.500 1H13.500V10H0.500Z" fill="#ddd" stroke="#666" />
        <path d="M2.500 3H11.500V8.500H2.500Z" fill="#8fb0dc" stroke="#3c5a85" />
        <path d="M4 12.500H10" stroke="#555" strokeWidth="1.500" />
      </Ic>
      <Caret />
    </button>
    <button aria-label="Grid and snaps" className="flex items-center gap-px">
      <Ic box={14} className="size-[14px]">
        <path d="M0.500 0.500H13.500V13.500H0.500ZM3.500 0V14M6 0V14M8.500 0V14M11 0V14M0 3.500H14M0 6H14M0 8.500H14M0 11H14" fill="#fff" stroke="#666" strokeWidth=".9" />
      </Ic>
      <Caret />
    </button>
    <button aria-label="Viewports" className="flex items-center gap-px">
      <Ic box={14} className="size-[14px]">
        <path d="M0.500 2H13.500V12.500H0.500Z" fill="#8ea6cd" stroke="#4a618a" />
        <path d="M7 2V12.500M0.500 7H13.500" stroke="#3c5175" strokeWidth="1.200" />
        <path d="M2 3.500H5.500V5.500H2ZM8.500 3.500H12V5.500H8.500ZM2 8.500H5.500V11H2ZM8.500 8.500H12V11H8.500Z" fill="#b9cae6" />
      </Ic>
      <Caret />
    </button>
  </div>
);

const Canvas = () => (
  <main className="relative flex flex-1 flex-col justify-between bg-[#fefefe] px-[3px] pb-[3px] pt-[3px]">
    <Boat />
    <div className="relative"><BrowserPanel /></div>
    <ViewCube />
    <div className="relative grid grid-cols-[1fr_auto_1fr] items-end">
      <section className="flex h-[21px] w-[251px] items-center border border-t-0 border-[#cfcfcf] bg-[#f1f1f1] pl-5 pt-px">
        <h2 className="text-[9px] text-[#666]">COMMENTS</h2>
        <PanelEnd plus />
      </section>
      <NavBar />
    </div>
  </main>
);

/* ---------- Timeline ---------- */

const controls: [string, string][] = [
  ["Go to start", "M1.500 1V11M11 1V11L3.500 6Z"],
  ["Step back", "M8.500 1.500V10.500L1 6ZM10.500 4.500V7.500"],
  ["Play", "M1.500 1V11L10.500 6Z"],
  ["Step forward", "M3 1.500V10.500L10.500 6ZM1 4.500V7.500"],
  ["Go to end", "M10.500 1V11M1 1V11L8.500 6Z"],
];

const Timeline = () => (
  <section aria-label="Timeline" className="relative flex h-[42px] border-t border-[#c6c6c6] bg-[#f1f1f1]">
    <div className="absolute left-[3px] top-px h-[5px] w-[294px] rounded-b bg-[#c9c9c9]" />
    <div className="flex shrink-0 gap-[9px] pl-2 pr-[14px] pt-[18px]">
      {controls.map(([label, d]) => (
        <button key={label} aria-label={label} className="size-3">
          <Ic box={12} className="size-3"><path d={d} fill="#444" stroke="#444" strokeWidth="1.300" /></Ic>
        </button>
      ))}
    </div>
    <ol className="flex min-w-0 flex-1 overflow-hidden pt-[6px]">
      {timeline.map((k, i) => (
        <li key={i} className={"relative flex h-[30px] w-5 shrink-0 flex-col items-center border-t-[5px] " + (i <= MARKER ? "border-[#fcd475]" : "border-transparent")}>
          <button
            aria-label={k}
            className={
              "flex h-[18px] w-5 shrink-0 items-center justify-center " +
              (errors.includes(i) ? "bg-[#e5e820]" : i === 33 ? "bg-[#d2d2d2]" : i > MARKER ? "opacity-30" : "")
            }
          >
            <Ic box={16} className="size-4">{glyphs[k]}</Ic>
          </button>
          <span className="h-[5px] w-px bg-[#bdbdbd]" />
          <span className={"h-[2px] bg-[#cacaca] " + (i === 0 ? "w-[10px] self-end" : "w-5")} />
          {i === MARKER && (
            <svg viewBox="0 0 10 27" className="absolute -right-[5px] -top-[3px] z-10 h-[27px] w-[10px]" aria-hidden="true">
              <path d="M0 0H10V4L6 8V27H4V8L0 4Z" fill="#606060" />
            </svg>
          )}
        </li>
      ))}
    </ol>
    <button aria-label="Timeline settings" className="mr-[10px] mt-[6px] flex w-[15px] items-center justify-center">
      <FaCog className="size-[14px] text-[#848484]" />
    </button>
  </section>
);

/* ---------- Taskbar ---------- */

const apps: { name: string; state: string; icon: React.ReactNode }[] = [
  { name: "Cortana", state: "", icon: <circle cx="10" cy="10" r="5.500" stroke="#111" strokeWidth="1.700" /> },
  { name: "Task view", state: "", icon: <path d="M4.500 7H12.500V13.500H4.500ZM3.500 3.500V5H13.500V3.500M3.500 17V15.500H13.500V17M16 3.500V8M16 11V17M15 9.500H17" stroke="#111" strokeWidth="1.200" /> },
  { name: "Lenovo Vantage", state: "", icon: <><path d="M1 1H19V15H1Z" fill="#12466b" /><path d="M1 10H19V12H1Z" fill="#2499c2" /><path d="M2.500 7.500H17.500" stroke="#b8d5e4" strokeWidth="1.600" strokeDasharray="2 .4" /><path d="M5 16H15L13 19H7Z" fill="#fafafa" /></> },
  { name: "Edge", state: "", icon: <><circle cx="10" cy="10" r="9.700" fill="#1577c9" /><path d="M1 7C3 1 9 -0.500 14 1.500C19 4 21 9 18.500 12C16 14.500 12 13.500 12.500 11.500C14 8 8 4 1 7Z" fill="#3fc97a" /><path d="M1 7C3 1 9 -0.500 12 1C6 2 3 4 1 7Z" fill="#2cb4d8" /><path d="M7 10C6 15 10 18 16 17.500C12 21 4 20 1.500 13C2 8 6 6 9 7.500C8 8 7.200 9 7 10Z" fill="#0c59a4" /><path d="M9.500 9.500C8.500 13 12 15.500 16 15L18 14" stroke="#dceaf3" strokeWidth="1.500" /></> },
  { name: "Mail", state: "", icon: <><path d="M0 7L10 0.500L20 7V8H0Z" fill="#0e4f95" /><path d="M1 7H19L10 13Z" fill="#eef4f9" /><path d="M0 7.500L10 13.500L20 7.500V19H0Z" fill="#2ba3ea" /><path d="M0 19L10 13.500L20 19Z" fill="#1e8fdb" /></> },
  { name: "File Explorer", state: "open", icon: <><path d="M1.500 2H8L9.500 4H18.500V17H1.500Z" fill="#fbd165" /><path d="M1.500 2H8L9.500 4H1.500Z" fill="#e0a52a" /><path d="M4 10.500H16V18H13V13.500H7V18H4Z" fill="#3f8fd2" /></> },
  { name: "Chrome", state: "open", icon: <><circle cx="10" cy="10" r="9.500" fill="#fbc116" /><path d="M10 10L1.800 5.200A9.500 9.500 0 0 1 18.200 5.200Z" fill="#e23b2e" /><path d="M10 10L1.800 5.200A9.500 9.500 0 0 0 9 19.500L13 13Z" fill="#259c4a" /><circle cx="10" cy="10" r="4.600" fill="#fff" /><circle cx="10" cy="10" r="3.600" fill="#3a7ff0" /></> },
  { name: "Opera", state: "", icon: <><ellipse cx="10" cy="10" rx="9.300" ry="9.700" fill="#d9101f" /><ellipse cx="10" cy="10" rx="4" ry="7" fill="#e7e8ee" /></> },
  { name: "Firefox", state: "", icon: <><circle cx="10" cy="10.800" r="9" fill="#ff5a2b" /><path d="M12 0C17 3 20 7 19 12C18 16 14 18 10 17C15 16 17 10 12 7Z" fill="#ffc62b" /><path d="M2 5L4 2L5 5L9 5L6 8Z" fill="#ff9a1f" /><circle cx="10" cy="11" r="4.300" fill="#7a3ad0" /><path d="M5 9C8 8 9 10 11 9.500C10 12 8 11 6 12Z" fill="#ff8a1f" /></> },
  { name: "Home", state: "", icon: <path d="M10 0.500L20 10L18.500 11.500L17.500 10.700V19H12V13H8V19H2.500V10.700L1.500 11.500L0 10Z" fill="#fff" stroke="#d6d6d6" strokeWidth=".6" /> },
  { name: "Fusion 360", state: "active", icon: <><path d="M1 1H18V12H20V19H9V18H1Z" fill="#f8d3b0" /><path d="M6 3H15V6H9.500V8.500H14V11.500H9.500V16H6Z" fill="#b9651b" /><path d="M11 15H18V17.500H11Z" fill="#fff" /></> },
  { name: "HP Support", state: "group", icon: <><path d="M1 1L6 2L3 6Z" fill="#4a91b5" /><path d="M14 2L19 1L17 6Z" fill="#4bb06d" /><path d="M1 14L4 16L2 19Z" fill="#c24876" /><path d="M16 16L19 15L18 19L15 18Z" fill="#c8a928" /><circle cx="10" cy="10" r="7.800" fill="#222" /><path d="M8 5L5.500 13M7 9H9L8 13M13 7L10.500 15.500M12.500 8H14.500L13.500 12H11.500" stroke="#c8c8c8" strokeWidth="1" /></> },
  { name: "Photos", state: "open", icon: <><path d="M1 1H19V19H1Z" fill="#2aa3e4" /><path d="M1 13L7 6L19 17V19H1Z" fill="#153f82" /><path d="M10 12L13 9.500L19 15V19H17Z" fill="#2865b5" /><circle cx="13.500" cy="5" r="1.800" fill="#fff" /></> },
  { name: "Webex", state: "open", icon: <><rect width="20" height="20" rx="4" fill="#111" /><path d="M10 6C12 3.500 16 4 17 8C17.500 11 16 13 14 14.500" stroke="#20b45d" strokeWidth="2.200" /><path d="M9.500 8C9.500 12 11.500 14.500 14 13.500" stroke="#2554e6" strokeWidth="2.600" /><path d="M7 5C3.500 4 2.500 7 3 10C3.500 14 6 15.500 8 14" stroke="#1ba9ec" strokeWidth="2.400" /><path d="M7 5C10 5.500 10.500 10 8 14" stroke="#2554e6" strokeWidth="2.400" /><path d="M12 12H20V17Q20 20 17 20H12Z" fill="#eef6f1" /><path d="M13.500 14H17V17.500H13.500ZM17 15.500L18.500 14.500V17Z" fill="#14955b" /></> },
];

const stateClass: Record<string, string> = {
  "": "",
  open: "after:w-[33px]",
  active: "bg-[#f8f8fa] after:w-10",
  group: "bg-white/25 after:w-[33px]",
};

const Taskbar = () => (
  <footer className="flex h-[33px] items-center bg-[linear-gradient(90deg,#e9dad2_0%,#e8dad4_26%,#dde1e8_33%,#d9e2eb_44%,#e0dfe0_51%,#e8dad4_60%,#e7dad4_100%)] font-['Open_Sans',sans-serif] text-[#222]">
    <button aria-label="Start" className="flex h-full w-[41px] shrink-0 items-center justify-center">
      <Ic box={14} className="size-[14px]"><path d="M0 2L6 1.200V6.700H0ZM6.700 1.100L14 0V6.700H6.700ZM0 7.300H6V12.800L0 12ZM6.700 7.300H14V14L6.700 12.900Z" fill="#000" /></Ic>
    </button>
    <label className="flex h-full w-[285px] shrink-0 items-center border border-[#cfcfcf] bg-white pl-2">
      <Ic box={16} className="size-4"><circle cx="9.800" cy="5.800" r="4.300" stroke="#333" strokeWidth="1.200" /><path d="M6.800 9L1.500 14.500" stroke="#333" strokeWidth="1.300" /></Ic>
      <input aria-label="Search" placeholder="Type here to search" className="ml-[7px] w-full min-w-0 bg-transparent text-[12px] outline-none placeholder:text-[#444] placeholder:opacity-100" />
    </label>
    <nav className="flex h-full" aria-label="Apps">
      {apps.map((a) => (
        <button
          key={a.name}
          aria-label={a.name}
          className={"relative flex w-[41px] items-center justify-center after:absolute after:bottom-0 after:h-[2px] after:bg-[#2f78c4] " + stateClass[a.state]}
        >
          <Ic box={20} className="size-5">{a.icon}</Ic>
        </button>
      ))}
    </nav>
    <div className="ml-auto flex h-full shrink-0 items-center">
      <button className="flex items-center text-[11px]">
        <Ic box={18} className="size-[18px]">
          <circle cx="6.500" cy="6.500" r="5" fill="#fbbf3a" />
          <path d="M5 15.500C0.500 15.500 0.500 9.500 5 9.500C6 4.500 12.500 4.500 13.500 9C18.500 8.500 18.500 15.500 14 15.500Z" fill="#b9dbf6" stroke="#f2f7fb" strokeWidth=".8" />
        </Ic>
        <span className="ml-2">13°C</span>
        <span className="ml-2">Mostly cloudy</span>
      </button>
      <div className="ml-3 flex items-center gap-[6px]">
        <button aria-label="Show hidden icons"><Ic box={14} className="size-[14px]"><path d="M2.500 9.500L7 5L11.500 9.500" stroke="#222" strokeWidth="1.200" /></Ic></button>
        <button aria-label="Battery"><Ic box={14} className="size-[14px]"><path d="M3 4.500H12V10.500H3Z" stroke="#111" fill="#333" /><path d="M13.200 6V9" stroke="#111" strokeWidth="1.300" /><path d="M0.500 3H5V6H0.500Z" fill="#e7dad4" stroke="#111" /><path d="M1.500 1V3M4 1V3" stroke="#111" /></Ic></button>
        <button aria-label="Wi-Fi"><Ic box={14} className="size-[14px]"><path d="M2 13A11 11 0 0 1 12.500 3M4.500 13A8.500 8.500 0 0 1 12.500 5.800M7 13A6 6 0 0 1 12.500 8.500" stroke="#333" strokeWidth="1.100" /><path d="M9.500 13A3.500 3.500 0 0 1 12.500 10.800V13Z" fill="#222" /></Ic></button>
        <button aria-label="Volume"><Ic box={14} className="size-[14px]"><path d="M1 5.500H3L6 2.500V11.500L3 8.500H1Z" stroke="#222" /><path d="M8 5Q9.500 7 8 9M10 3.500Q12.500 7 10 10.500" stroke="#333" /><path d="M12 2Q15 7 12 12" stroke="#aaa" /></Ic></button>
        <button aria-label="Meet now"><Ic box={14} className="size-[14px]"><path d="M3 5H9V10H3ZM9 7L11.500 5.500V9.500L9 8M3 2.500Q6.500 0.500 10 2.500M3 12.500Q6.500 14.500 10 12.500" stroke="#222" strokeWidth="1.200" /></Ic></button>
      </div>
      <button aria-label="Input language" className="ml-2 text-[10px]">ENG</button>
      <button className="ml-1 flex flex-col items-center text-[10px] leading-[15px]">
        <time>10:08 AM</time>
        <time>11/19/2021</time>
      </button>
      <button aria-label="Notification centre" className="relative ml-[10px] h-full w-8">
        <Ic box={16} className="ml-px size-4"><path d="M0.500 1H14V11H7L4 14V11H0.500Z" fill="#111" /><path d="M3 4H11.500M3 6.500H11.500M3 9H8" stroke="#ddd" strokeWidth=".9" /></Ic>
        <span className="absolute left-2 top-[15px] flex size-[15px] items-center justify-center rounded-full border border-[#888] bg-[#c9c9c9] text-[9px] leading-none">21</span>
      </button>
      <span className="mr-[3px] h-full w-px bg-[#bfb4b0]" />
    </div>
  </footer>
);

export default function App() {
  return (
    <div className="flex min-h-screen flex-col overflow-hidden bg-white font-[Roboto,'Liberation_Sans',sans-serif]">
      <TitleBar />
      <DocBar />
      <Ribbon />
      <Canvas />
      <Timeline />
      <Taskbar />
    </div>
  );
}
